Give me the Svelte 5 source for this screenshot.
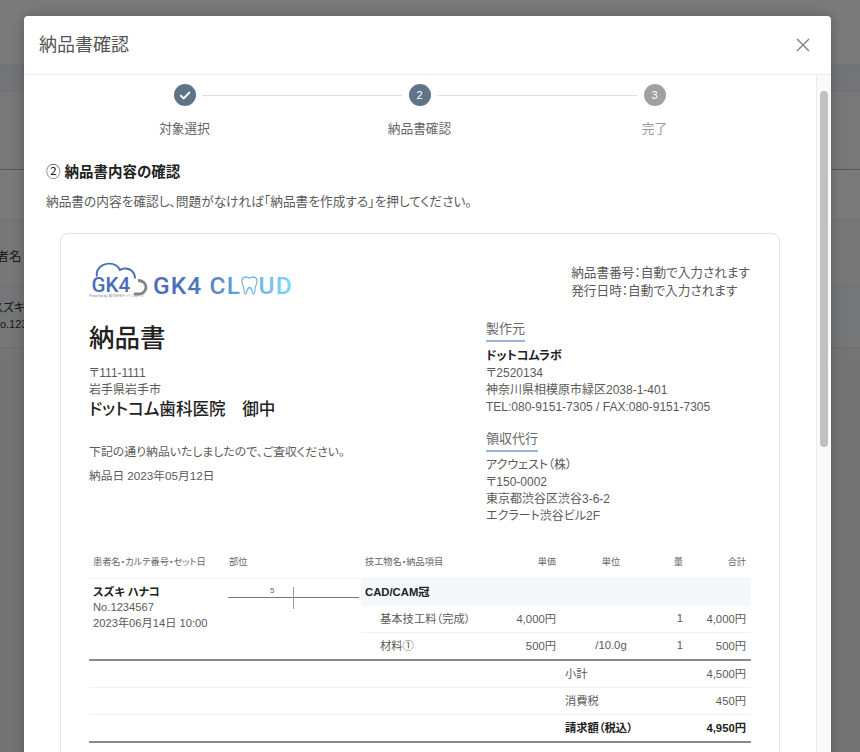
<script>
  const steps = [
    { label: '対象選択', state: 'done' },
    { label: '納品書確認', state: 'current', n: 2 },
    { label: '完了', state: 'todo', n: 3 }
  ];
</script>

<div class="page">
  <div class="under">
    <div class="u-top"></div>
    <div class="u-band"></div>
    <div class="u-gap"></div>
    <div class="u-rule"></div>
    <div class="u-head"><span>患者名</span></div>
    <div class="u-row"><span>スズキ</span><span>No.1234567</span></div>
    <div class="u-strip"></div>
    <div class="u-foot"></div>
  </div>

  <div class="backdrop"></div>

  <section class="modal">
    <header class="m-head">
      <h1>納品書確認</h1>
      <svg class="close" viewBox="0 0 14 14" width="14" height="14"><path d="M1 1 13 13M13 1 1 13" stroke="#7d7d7d" stroke-width="1.400" fill="none"/></svg>
    </header>
    <div class="m-body">
      <div class="content">
        <div class="stepper">
          {#each steps as s, i}
            <div class="step">
              <div class="track">
                {#if i > 0}<span class="line left"></span>{/if}
                <span class="dot {s.state}">
                  {#if s.state === 'done'}
                    <svg viewBox="0 0 22 22" width="22" height="22"><path d="M6.300 11.200 9.700 14.500 15.900 8" stroke="#fff" stroke-width="1.900" fill="none"/></svg>
                  {:else}{s.n}{/if}
                </span>
                {#if i < 2}<span class="line right"></span>{/if}
              </div>
              <div class="s-label {s.state}">{s.label}</div>
            </div>
          {/each}
        </div>

        <h2><span class="circled">②</span> 納品書内容の確認</h2>
        <p class="desc">納品書の内容を確認し、問題がなければ「納品書を作成する」を押してください。</p>

        <article class="card">
          <div class="top">
            <svg class="logo" viewBox="0 0 210 40" width="210" height="40">
              <defs>
                <linearGradient id="lg" gradientUnits="userSpaceOnUse" x1="64" y1="0" x2="204" y2="0">
                  <stop offset="0" stop-color="#4b6cb7"/>
                  <stop offset="0.3" stop-color="#4f74bd"/>
                  <stop offset="0.62" stop-color="#62a5dc"/>
                  <stop offset="1" stop-color="#80d8fb"/>
                </linearGradient>
              </defs>
              <path d="M8 14.500C6.500 9 11 2 20 1.600C25 1.500 29 4 31 8C34 5.600 40 6 43 9C45.500 11.500 46 14 46 16.500" fill="none" stroke="#4b6cb7" stroke-width="1.900"/>
              <path d="M49 18.500C54 18.500 57 21.500 57 25C57 29 54 32 50 32H45" fill="none" stroke="#808488" stroke-width="2.800"/>
              <text x="2.500" y="29.600" class="l-gk">GK4</text>
              <text x="0" y="35" class="l-tiny">Powered by 株式会社ドットコムラボ</text>
              <text x="64" y="32" class="l-name" fill="url(#lg)">GK4 CL</text>
              <path d="M153 19C153 16 155 15 157 15C158.500 15 159.500 16 160.500 16C161.500 16 162.500 15 164 15C166 15 168 16 168 19C168 22 166.500 23.500 166.200 26C166 28.500 165.500 32 164.500 32C163 32 163.300 25.500 160.500 25.500C157.700 25.500 158 32 156.500 32C155.500 32 155 28.500 154.800 26C154.500 23.500 153 22 153 19Z" fill="none" stroke="#7ab8e8" stroke-width="1.300"/>
              <text x="169.500" y="32" class="l-name" fill="url(#lg)">UD</text>
            </svg>
            <div class="numbers">
              <div>納品書番号：自動で入力されます</div>
              <div>発行日時：自動で入力されます</div>
            </div>
          </div>

          <div class="parties">
            <div class="to">
              <div class="title">納品書</div>
              <div class="addr">〒111-1111</div>
              <div class="addr">岩手県岩手市</div>
              <div class="clinic">ドットコム歯科医院　御中</div>
              <p class="note">下記の通り納品いたしましたので、ご査収ください。</p>
              <p class="date">納品日 2023年05月12日</p>
            </div>
            <div class="from">
              <div class="tag">製作元</div>
              <div class="name">ドットコムラボ</div>
              <div>〒2520134</div>
              <div>神奈川県相模原市緑区2038-1-401</div>
              <div>TEL:080-9151-7305 / FAX:080-9151-7305</div>
              <div class="tag second">領収代行</div>
              <div class="first">アクウェスト（株）</div>
              <div>〒150-0002</div>
              <div>東京都渋谷区渋谷3-6-2</div>
              <div>エクラート渋谷ビル2F</div>
            </div>
          </div>

          <table>
            <colgroup>
              <col style="width:139px" /><col style="width:133px" /><col style="width:139px" /><col style="width:61px" /><col style="width:100px" /><col style="width:27px" /><col style="width:63px" />
            </colgroup>
            <thead>
              <tr>
                <th>患者名・カルテ番号・セット日</th>
                <th class="part">部位</th>
                <th>技工物名・納品項目</th>
                <th class="r">単価</th>
                <th class="c">単位</th>
                <th class="r">量</th>
                <th class="r">合計</th>
              </tr>
            </thead>
            <tbody>
              <tr class="group">
                <td rowspan="3" class="patient">
                  <div class="p-name">スズキ ハナコ</div>
                  <div>No.1234567</div>
                  <div>2023年06月14日 10:00</div>
                </td>
                <td rowspan="3" class="chart-cell">
                  <div class="chart"><span class="num">5</span></div>
                </td>
                <td colspan="5" class="g-title">CAD/CAM冠</td>
              </tr>
              <tr class="item">
                <td class="indent">基本技工料（完成）</td>
                <td class="r">4,000円</td>
                <td class="c"></td>
                <td class="r">1</td>
                <td class="r">4,000円</td>
              </tr>
              <tr class="item last">
                <td class="indent">材料①</td>
                <td class="r">500円</td>
                <td class="c">/10.0g</td>
                <td class="r">1</td>
                <td class="r">500円</td>
              </tr>
              <tr class="sum first-sum">
                <td colspan="4"></td>
                <td colspan="2" class="s-l">小計</td>
                <td class="r">4,500円</td>
              </tr>
              <tr class="sum">
                <td colspan="4"></td>
                <td colspan="2" class="s-l">消費税</td>
                <td class="r">450円</td>
              </tr>
              <tr class="sum total">
                <td colspan="4"></td>
                <td colspan="2" class="s-l">請求額（税込）</td>
                <td class="r">4,950円</td>
              </tr>
            </tbody>
          </table>
        </article>
      </div>
      <div class="scrollbar"><div class="thumb"></div></div>
    </div>
  </section>
</div>

<style>
  :global(html), :global(body) { margin: 0; height: 100%; overflow: hidden; }
  .page {
    position: relative;
    width: 860px;
    height: 752px;
    overflow: hidden;
    font-family: "Liberation Sans", "Noto Sans CJK JP", sans-serif;
    font-feature-settings: "palt";
    color: #5f5f5f;
    background: #f4f4f4;
  }
  .under { display: flex; flex-direction: column; height: 100%; font-size: 13px; color: #333; }
  .u-top { height: 64px; background: #f4f4f4; }
  .u-band { height: 28px; background: #e4e8f0; border-bottom: 1px solid #e2e2e2; border-top: 1px solid #e2e2e2; box-sizing: border-box; }
  .u-gap { height: 77px; background: #f0f0f0; }
  .u-rule { height: 1px; background: #9db2dc; margin-bottom: 49px; }
  .u-head { height: 67px; background: #eee; border-top: 1px solid #e2e2e2; display: flex; align-items: center; box-sizing: border-box; }
  .u-head span { margin-left: -16px; font-size: 12.500px; margin-top: 4px; white-space: nowrap; }
  .u-row { height: 61px; background: #eaecf1; border-top: 1px solid #e2e2e2; display: flex; flex-direction: column; font-size: 12px; line-height: 16px; padding-top: 13px; box-sizing: border-box; overflow: hidden; white-space: nowrap; }
  .u-row span:first-child { margin-left: -8px; }
  .u-row span:last-child { margin-left: -8px; font-size: 11px; }
  .u-strip { height: 15px; background: #e8e8e8; border-top: 1px solid #dedede; border-bottom: 1px solid #dedede; box-sizing: border-box; }
  .u-foot { flex: 1; background: #e6e6e6; }
  .backdrop { position: absolute; inset: 0; background: rgba(0, 0, 0, 0.5); }

  .modal {
    position: absolute;
    left: 24px;
    top: 16px;
    width: 807px;
    height: 760px;
    background: #fff;
    border-radius: 4px;
    box-shadow: 0 0 12px rgba(0, 0, 0, 0.25);
    display: flex;
    flex-direction: column;
  }
  .m-head {
    height: 58px;
    flex: none;
    border-bottom: 1px solid #ececec;
    display: flex;
    align-items: center;
    justify-content: space-between;
    padding: 0 21px 0 15px;
  }
  h1 { margin: 0; font-size: 18px; font-weight: 400; color: #555; line-height: 26px; }
  .close { display: block; }
  .m-body { flex: 1; display: flex; min-height: 0; }
  .content { width: 792px; flex: none; box-sizing: border-box; padding: 9px 36px 0 22px; }
  .scrollbar { width: 15px; flex: none; background: #fafafa; border-left: 1px solid #ececec; box-sizing: border-box; padding: 16px 3px 0 3px; }
  .thumb { height: 356px; background: #c1c1c1; border-radius: 4px; }

  .stepper { display: grid; grid-template-columns: repeat(3, 235px); margin-left: 21px; }
  .step { display: flex; flex-direction: column; align-items: center; }
  .track { position: relative; width: 100%; height: 22px; display: flex; justify-content: center; align-items: center; }
  .dot {
    width: 22px; height: 22px; border-radius: 50%;
    display: flex; align-items: center; justify-content: center;
    font-size: 11px; color: #fff;
  }
  .dot.done, .dot.current { background: #5f7389; }
  .dot.todo { background: #a0a0a0; }
  .line { position: absolute; top: 11px; height: 1px; background: #dcdfe3; }
  .line.right { left: 135px; right: 0; }
  .line.left { left: 0; right: 135px; }
  .s-label { font-size: 12.700px; line-height: 18px; margin-top: 14px; color: #666; }
  .s-label.todo { color: #9a9a9a; }

  h2 { margin: 24px 0 0 0; font-size: 14.500px; line-height: 20px; font-weight: 700; color: #222; }
  .circled { font-weight: 400; }
  .desc { margin: 10px 0 0; font-size: 12.700px; line-height: 20px; color: #5a5a5a; }

  .card {
    margin: 21px 0 0 14px;
    width: 720px;
    box-sizing: border-box;
    border: 1px solid #e4e4e4;
    border-radius: 8px;
    padding: 28px 29px 60px 28px;
  }
  .top { display: flex; justify-content: space-between; align-items: flex-start; }
  .logo { display: block; }
  .l-gk { font-size: 20.500px; font-weight: 500; fill: #4b6cb7; font-family: Roboto, sans-serif; }
  .l-tiny { font-size: 3.500px; fill: #808488; }
  .l-name { font-size: 24.500px; font-weight: 500; font-family: Roboto, sans-serif; letter-spacing: 1.100px; }
  .numbers { font-size: 12.650px; line-height: 18px; color: #5a5a5a; margin-top: 2px; }
  .parties { display: flex; margin-top: 18px; height: 218px; }
  .to { width: 397px; flex: none; color: #5a5a5a; font-size: 12px; }
  .title { font-size: 25.500px; line-height: 36px; color: #222; font-weight: 500; margin-bottom: 9px; }
  .addr { line-height: 17px; }
  .clinic { font-size: 16.600px; line-height: 24px; color: #222; font-weight: 500; margin-top: -1px; }
  .note { margin: 21px 0 0; line-height: 18px; font-size: 11.900px; }
  .date { margin: 6px 0 0; line-height: 18px; font-size: 11.700px; }
  .from { font-size: 12px; line-height: 17px; color: #5a5a5a; }
  .tag { display: table; font-size: 13px; line-height: 18px; padding-bottom: 2px; border-bottom: 2px solid #9db2dc; color: #6a6a6a; margin-bottom: 6px; }
  .tag.second { margin-top: 14px; margin-bottom: 5px; }
  .name { font-weight: 700; color: #222; }

  table { border-collapse: collapse; table-layout: fixed; width: 662px; margin-top: 8px; font-size: 11.300px; color: #5a5a5a; }
  th { font-size: 9.200px; font-weight: 400; height: 32px; text-align: left; padding: 0 4px 2px; color: #666; white-space: nowrap; box-sizing: border-box; }
  th.part { padding-left: 1px; }
  td { padding: 0 4px 2px; height: 24px; vertical-align: middle; }
  .r { text-align: right; }
  .c { text-align: center; }
  th.r, .item td.r, .sum td.r { padding-right: 5px; }
  .group td { border-top: 1px solid #f4f4f4; }
  .g-title { background: #f4f7fc; font-weight: 700; color: #222; height: 25px; }
  .patient { vertical-align: top; padding-top: 6px; line-height: 15.500px; font-size: 11.200px; }
  .p-name { font-weight: 700; color: #222; }
  .chart-cell { vertical-align: top; padding: 0; }
  .chart { position: relative; height: 30px; margin-top: 8px; width: 131px; }
  .chart::before { content: ""; position: absolute; left: 0; right: 0; top: 10px; height: 1px; background: #777; }
  .chart::after { content: ""; position: absolute; left: 65px; top: 0; height: 22px; width: 1px; background: #999; }
  .num { position: absolute; left: 42px; top: -2px; font-size: 8px; line-height: 12px; color: #666; }
  .item td { border-bottom: 1px solid #f0f0f0; }
  .indent { padding-left: 19px; white-space: nowrap; }
  .item.last td { border-bottom: none; }
  tr.first-sum td { border-top: 2px solid #8a8a8a; }
  .sum td { border-bottom: 1px solid #f0f0f0; }
  .sum.total td { border-bottom: 2px solid #8a8a8a; color: #222; font-weight: 700; }
</style>
